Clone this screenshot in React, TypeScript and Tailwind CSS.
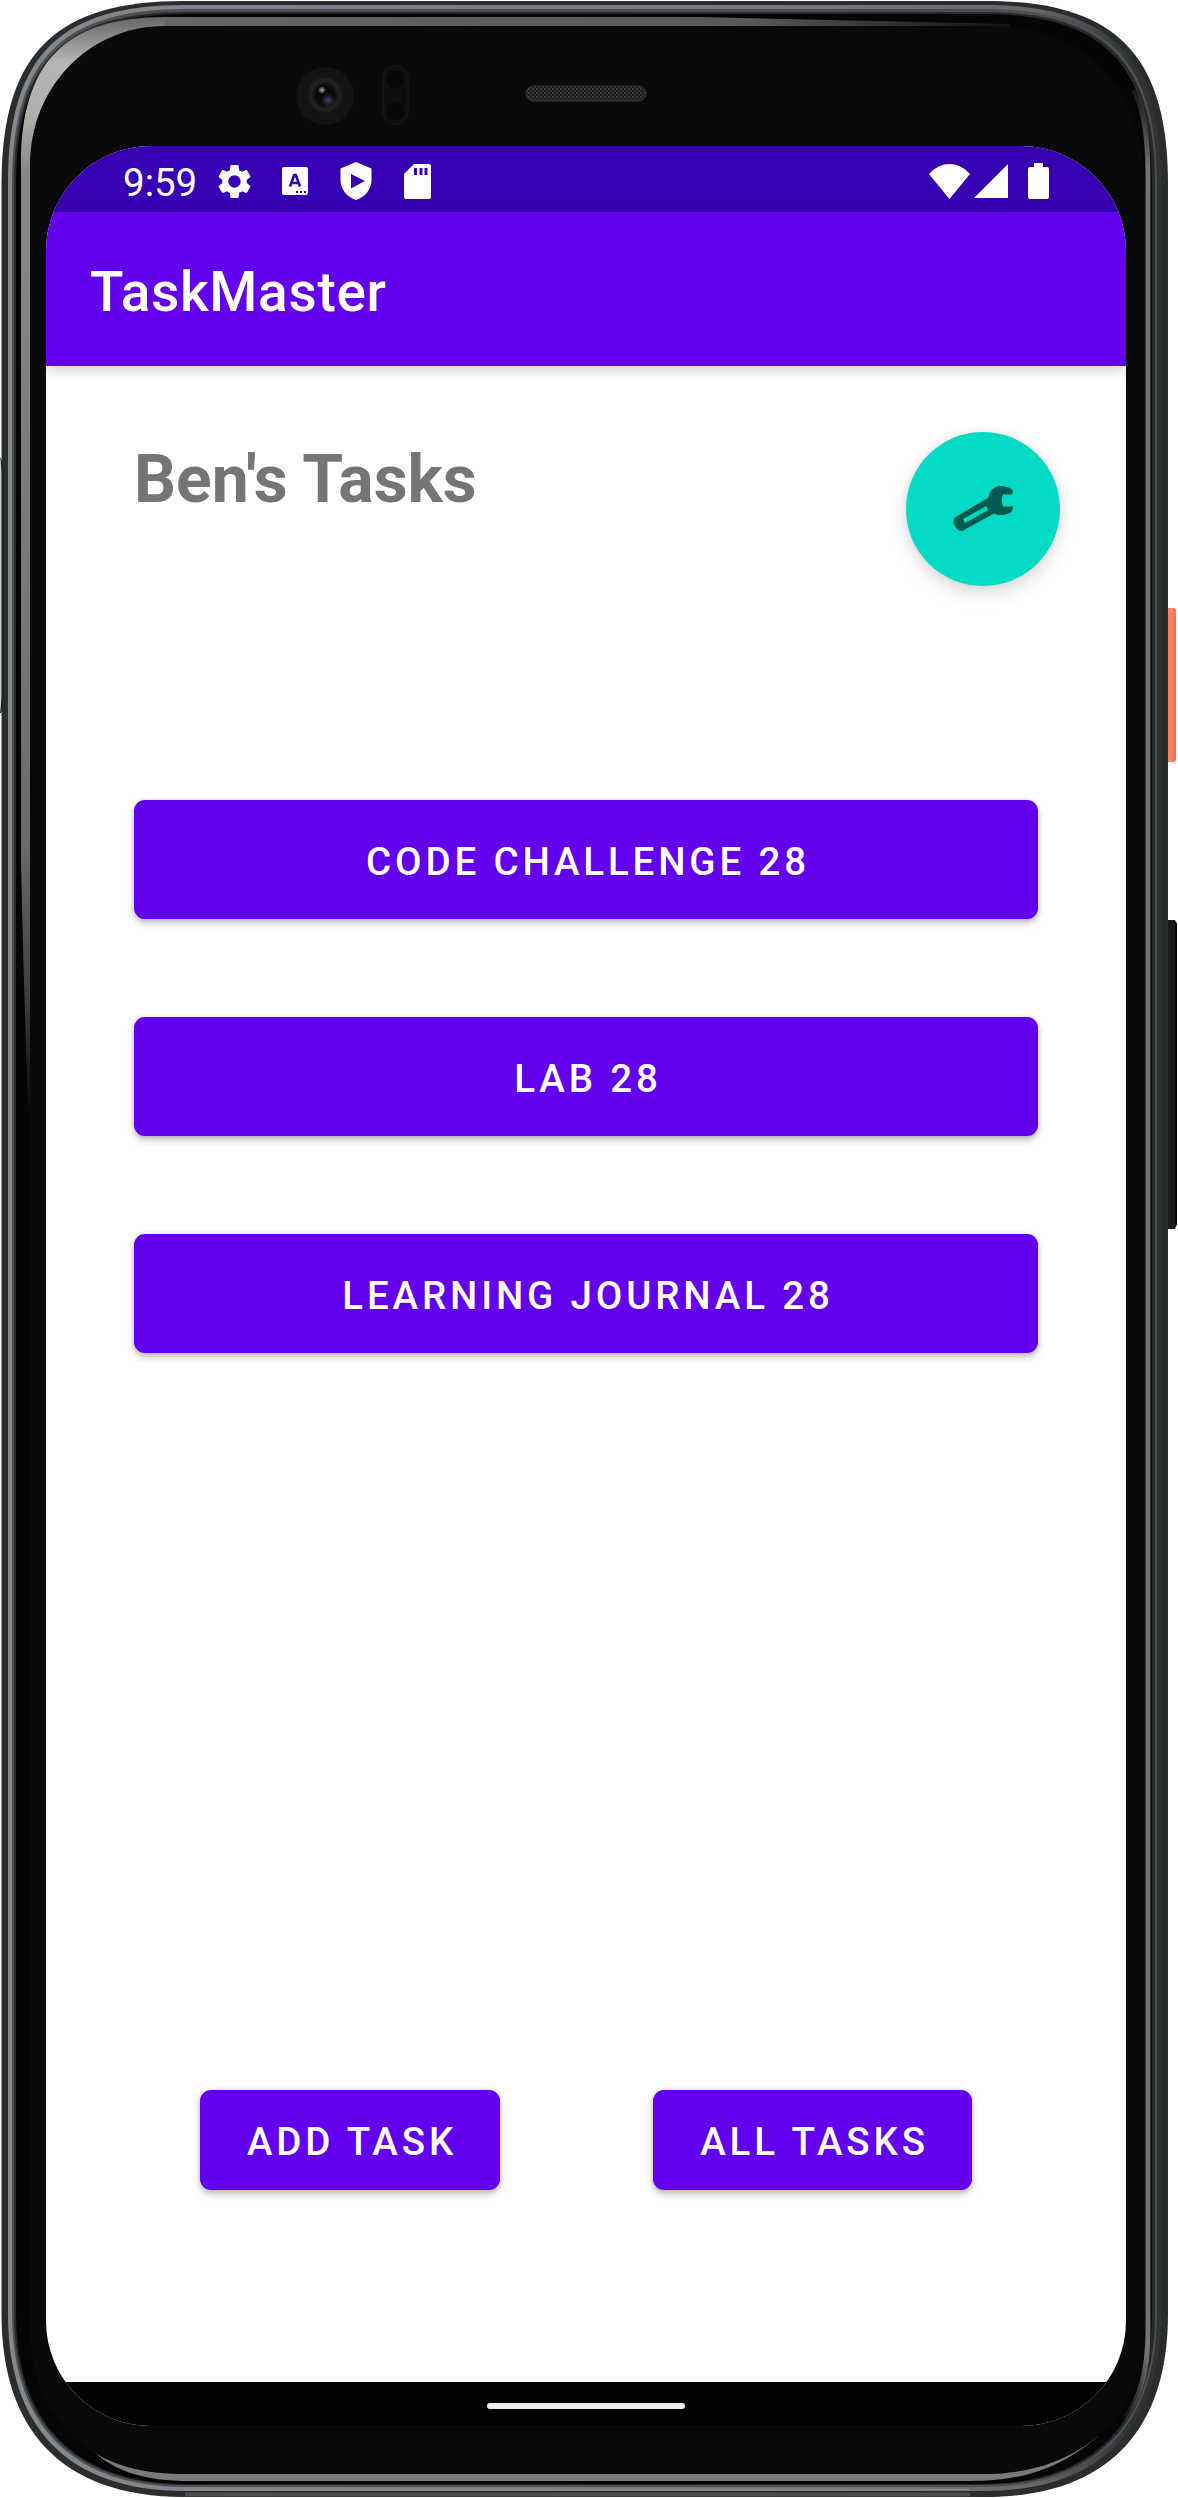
import React from "react";

function outline(l: number, t: number, r: number, b: number, k: number) {
  const a = 183 - k;
  const c = 48 - k * 0.25;
  const d = 58 - k * 0.3;
  const e = d + 11;
  return `M${l} ${t + a}C${l} ${t + c} ${l + d} ${t} ${l + a} ${t}H${r - a}C${r - d} ${t} ${r} ${t + c} ${r} ${t + a}V${b - a}C${r} ${b - e} ${r - d} ${b} ${r - a} ${b}H${l + a}C${l + d} ${b} ${l} ${b - e} ${l} ${b - a}Z`;
}

function PhoneFrame() {
  return (
    <svg className="absolute inset-0 h-[2498px] w-[1178px]" viewBox="0 0 1178 2498" fill="none" aria-hidden="true">
      <defs>
        <linearGradient id="rim" x1="0" x2="1178" y1="0" y2="0" gradientUnits="userSpaceOnUse">
          <stop offset="0" stopColor="#85888f" />
          <stop offset="0.7" stopColor="#75767c" />
          <stop offset="0.88" stopColor="#66676d" />
          <stop offset="0.96" stopColor="#303336" />
          <stop offset="1" stopColor="#303336" />
        </linearGradient>
        <linearGradient id="glass" x1="0" x2="0" y1="17" y2="1110" gradientUnits="userSpaceOnUse">
          <stop offset="0" stopColor="#666" />
          <stop offset="0.04" stopColor="#b4b4b4" />
          <stop offset="0.09" stopColor="#b0b0b0" />
          <stop offset="0.14" stopColor="#888" />
          <stop offset="0.75" stopColor="#6c6c6c" />
          <stop offset="0.9" stopColor="#3c3c3c" />
          <stop offset="1" stopColor="#0a0a0a" />
        </linearGradient>
        <linearGradient id="sideGlass" x1="0" x2="0" y1="75" y2="2425" gradientUnits="userSpaceOnUse">
          <stop offset="0" stopColor="#737373" stopOpacity="0" />
          <stop offset="0.04" stopColor="#737373" />
          <stop offset="0.97" stopColor="#737373" />
          <stop offset="1" stopColor="#737373" stopOpacity="0" />
        </linearGradient>
        <linearGradient id="topGlass" x1="150" x2="1010" y1="0" y2="0" gradientUnits="userSpaceOnUse">
          <stop offset="0" stopColor="#666" />
          <stop offset="0.7" stopColor="#585858" />
          <stop offset="1" stopColor="#101010" />
        </linearGradient>
        <linearGradient id="orange" x1="1166" x2="1176" y1="0" y2="0" gradientUnits="userSpaceOnUse">
          <stop offset="0" stopColor="#b94f35" />
          <stop offset="0.25" stopColor="#ff8062" />
          <stop offset="0.6" stopColor="#ec8468" />
          <stop offset="1" stopColor="#ff6443" />
        </linearGradient>
        <radialGradient id="lens" cx="0.5" cy="0.5" r="0.5">
          <stop offset="0" stopColor="#050507" />
          <stop offset="0.55" stopColor="#0a0a0d" />
          <stop offset="0.8" stopColor="#222" />
          <stop offset="1" stopColor="#1b1b1b" />
        </radialGradient>
        <radialGradient id="glint" cx="0.5" cy="0.5" r="0.5">
          <stop offset="0" stopColor="#aaa" />
          <stop offset="1" stopColor="#aaa" stopOpacity="0" />
        </radialGradient>
        <radialGradient id="coating" cx="0.5" cy="0.5" r="0.5">
          <stop offset="0" stopColor="#35405f" />
          <stop offset="1" stopColor="#35405f" stopOpacity="0" />
        </radialGradient>
        <pattern id="mesh" width="4" height="4" patternUnits="userSpaceOnUse">
          <rect width="4" height="4" fill="#1b1b1b" />
          <circle cx="1" cy="1" r="0.9" fill="#4a4a4a" />
          <circle cx="3" cy="3" r="0.9" fill="#3c3c3c" />
        </pattern>
      </defs>
      <rect x="1160" y="608" width="16" height="154" rx="3" fill="url(#orange)" />
      <path d="M1166 920h9l2 4v300l-2 5h-9Z" fill="#1a1a19" />
      <path d="M1176 923v302" stroke="#080808" strokeWidth="2" />
      <path d={outline(1.5, 1, 1168, 2497, 0)} fill="#2b2d2c" />
      <path d="M0 457Q4 462 4 480V690Q4 705 1 713H0Z" fill="#1b2220" />
      <path d="M0 457Q1.500 462 1.500 480V690Q1.500 705 0 713Z" fill="#ccd0cf" />
      <path d={outline(8, 5, 1161, 2491, 6)} fill="url(#rim)" />
      <path d={outline(12, 9, 1157, 2487, 9)} fill="#4c4e52" />
      <path d={outline(14, 12, 1155, 2485, 11)} fill="#27282a" />
      <path d={outline(16, 14, 1152, 2484, 12)} fill="#050505" />
      <path d="M185 2494.500H970" stroke="#4c4c4c" strokeWidth="4" />
      <path d="M185 2489.500H970" stroke="#868686" strokeWidth="1.500" />
      <path d="M21 860V165C21 64 64 17 165 17H190V40L40 190V1110H28Q23 960 21 860Z" fill="url(#glass)" />
      <path d="M165 17H700L1010 24V27H165Z" fill="url(#topGlass)" />
      <path d="M1134 90Q1148 118 1148 175V2330C1148 2372 1140 2398 1124 2420" stroke="url(#sideGlass)" strokeWidth="5" />
      <path d="M84 2442C110 2472 145 2481 190 2481H970C1030 2481 1066 2464 1098 2436L1060 2450L970 2470H190Z" fill="#7a7a7a" />
      <path d="M30 165C30 88 88 26 165 26H985C1085 26 1145 86 1145 190V2330C1145 2414 1080 2474 985 2474H180C90 2474 30 2420 30 2330Z" fill="#09090b" />

      <circle cx="325" cy="96" r="29" fill="#131313" />
      <circle cx="325" cy="95" r="17.500" fill="url(#lens)" />
      <circle cx="328" cy="100" r="7" fill="url(#coating)" />
      <circle cx="322" cy="90" r="4" fill="url(#glint)" />
      <rect x="383" y="66" width="25" height="58" rx="12.500" fill="#0d0d0e" stroke="#121212" strokeWidth="2" />
      <circle cx="395" cy="79" r="10" fill="#070708" stroke="#101010" />
      <circle cx="395" cy="111" r="10" fill="#070708" stroke="#101010" />
      <rect x="526" y="86" width="120" height="15" rx="7.500" fill="url(#mesh)" stroke="#333" />
    </svg>
  );
}

function StatusBar() {
  return (
    <div className="flex h-[66px] shrink-0 items-center bg-[#3700b3] pt-[4px] pl-[77px] pr-[77px] text-white">
      <span className="w-[76px] pt-[4px] text-[38.5px] leading-none whitespace-nowrap">9:59</span>
      <svg className="ml-[15px] size-[41px]" viewBox="0 0 24 24" fill="currentColor">
        <path d="M19.14 12.94c.04-.3.06-.61.06-.94 0-.32-.02-.64-.07-.94l2.03-1.58c.18-.14.23-.41.12-.61l-1.92-3.32c-.12-.22-.37-.29-.59-.22l-2.39.96c-.5-.38-1.03-.7-1.62-.94l-.36-2.54c-.04-.24-.24-.41-.48-.41h-3.84c-.24 0-.43.17-.47.41l-.36 2.54c-.59.24-1.13.57-1.62.94l-2.39-.96c-.22-.08-.47 0-.59.22L2.74 8.87c-.12.21-.08.47.12.61l2.03 1.58c-.05.3-.09.63-.09.94s.02.64.07.94l-2.03 1.58c-.18.14-.23.41-.12.61l1.92 3.32c.12.22.37.29.59.22l2.39-.96c.5.38 1.03.7 1.62.94l.36 2.54c.05.24.24.41.48.41h3.84c.24 0 .44-.17.47-.41l.36-2.54c.59-.24 1.13-.56 1.62-.94l2.39.96c.22.08.47 0 .59-.22l1.92-3.32c.12-.22.07-.47-.12-.61l-2.01-1.58zM12 15.6c-1.98 0-3.6-1.62-3.6-3.6s1.62-3.6 3.6-3.6 3.6 1.62 3.6 3.6-1.62 3.6-3.6 3.6z" />
      </svg>
      <svg className="ml-[27px] h-[28px] w-[26px]" viewBox="0 0 26 28">
        <rect width="26" height="28" rx="2" fill="#fff" />
        <path d="M8 19.5 12.2 8h1.6L18 19.5M10 16h6" fill="none" stroke="#3700b3" strokeWidth="2.6" />
        <path d="M14 25h2M18 25h2M22 25h2" stroke="#3700b3" strokeWidth="2" />
      </svg>
      <svg className="ml-[32px] h-[38px] w-[32px]" viewBox="0 0 32 38">
        <path d="M16 0 31.5 6.5V18C31.5 27 25 35.5 16 38 7 35.5.5 27 .5 18V6.5Z" fill="#fff" />
        <path d="M11 12v14.5L25 19Z" fill="#3700b3" />
      </svg>
      <svg className="ml-[32px] h-[35px] w-[27px]" viewBox="0 0 27 35">
        <path d="M10 0H25a2 2 0 0 1 2 2V33a2 2 0 0 1-2 2H2a2 2 0 0 1-2-2V10Z" fill="#fff" />
        <path d="M11.5 4v7M17 4v7M22 4v7" stroke="#3700b3" strokeWidth="3" />
      </svg>
      <svg className="ml-auto h-[35px] w-[41px]" viewBox="0 0 41 35" fill="currentColor">
        <path d="M20.5 35 0 10C12-3.3 29-3.3 41 10Z" />
      </svg>
      <svg className="ml-[4px] size-[34px]" viewBox="0 0 34 34" fill="currentColor">
        <path d="M34 0v34H0Z" />
      </svg>
      <svg className="ml-[20px] h-[36px] w-[21px]" viewBox="0 0 21 36" fill="currentColor">
        <path d="M6 0h9v4h4a2 2 0 0 1 2 2v28a2 2 0 0 1-2 2H2a2 2 0 0 1-2-2V6a2 2 0 0 1 2-2h4Z" />
      </svg>
    </div>
  );
}

function WrenchIcon() {
  return (
    <svg className="h-[46px] w-[60px]" viewBox="0 0 60 46">
      <path
        d="M58 2.5C50-1 43-1 38.5 4 36.500 6.5 36 9 35.5 11.5L3.5 30.5C0 33-.5 35 1 38.5L3.5 42.5C6 45.5 9 45.5 12 43.5L41 27.5C46 30 52 29.5 58 26.5L60 22V20.5H50C48.5 16.500 48.5 12.500 50 8.5H58.5Q61.5 5 58 2.5ZM33.5 20 35 24 12 37 10 33Z"
        fill="#015a50"
        fillRule="evenodd"
      />
    </svg>
  );
}

const buttonStyle =
  "flex items-center justify-center rounded-[11px] bg-[#6200ee] pl-[4px] text-[38.5px] leading-none font-medium tracking-[3.85px] text-white uppercase shadow-[0_4px_7px_rgba(0,0,0,0.25),0_0_4px_rgba(0,0,0,0.12)] whitespace-nowrap";

function TaskButton({ label }: { label: string }) {
  return <button className={`${buttonStyle} h-[119px] w-full pt-[6px]`}>{label}</button>;
}

export default function App() {
  return (
    <div className="relative h-[2498px] w-[1178px] overflow-hidden bg-white font-[Roboto,sans-serif]">
      <PhoneFrame />
      <div className="relative pt-[146px] pl-[46px]">
        <div className="flex h-[2280px] w-[1080px] flex-col overflow-hidden rounded-[105px] bg-white">
          <StatusBar />
          <header className="relative flex h-[154px] shrink-0 items-center bg-[#6200ee] pt-[7px] pl-[44px] shadow-[0_3px_14px_rgba(0,0,0,0.22)]">
            <h1 className="text-[55px] leading-none font-medium tracking-[0.69px] text-white">TaskMaster</h1>
          </header>
          <main className="flex flex-1 flex-col pt-[66px]">
            <div className="flex h-[154px] items-start justify-between pr-[66px] pl-[88px]">
              <h2 className="pt-[15px] text-[66px] leading-none font-bold text-[#757575]">Ben&apos;s Tasks</h2>
              <button
                aria-label="Settings"
                className="flex size-[154px] items-center justify-center rounded-full bg-[#03dac5] shadow-[0_8px_18px_rgba(0,0,0,0.13),0_0_10px_rgba(0,0,0,0.08)]"
              >
                <WrenchIcon />
              </button>
            </div>
            <div className="mt-[214px] flex flex-col gap-[98px] px-[88px]">
              <TaskButton label="Code Challenge 28" />
              <TaskButton label="Lab 28" />
              <TaskButton label="Learning Journal 28" />
            </div>
            <div className="mt-[737px] flex justify-between px-[154px]">
              <button className={`${buttonStyle} h-[100px] w-[300px] pt-[4px]`}>Add Task</button>
              <button className={`${buttonStyle} h-[100px] w-[319px] pt-[4px]`}>All Tasks</button>
            </div>
          </main>
          <nav className="flex h-[44px] shrink-0 items-center justify-center bg-black pt-[4px]">
            <div className="h-[6px] w-[198px] rounded-[3px] bg-[#eee]" />
          </nav>
        </div>
      </div>
    </div>
  );
}
